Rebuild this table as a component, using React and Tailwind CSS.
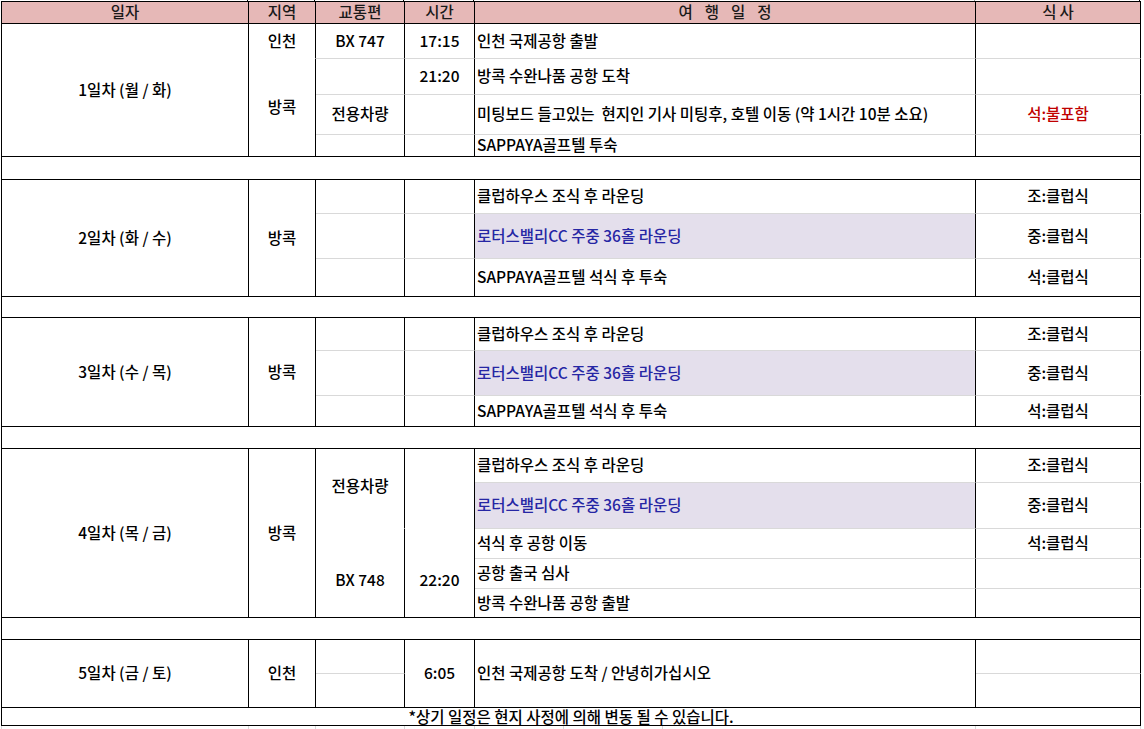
import React from "react";

const COLS = "grid grid-cols-[247px_67px_89px_70px_501px_165px]";

const SPAN = {
  1: "",
  2: "row-span-2",
  3: "row-span-3",
  4: "row-span-4",
  5: "row-span-5",
};
const BOT = {
  g: "border-b-[#d9d9d9]",
  k: "border-b-black",
  w: "border-b-white",
};

function C({ span = 1, b = "g", className = "items-center pb-[3px]", extra = "", children }) {
  return (
    <div
      className={`flex justify-center border-r border-b border-r-black ${BOT[b]} ${SPAN[span]} ${className} ${extra}`}
    >
      {children}
    </div>
  );
}

function E({ span = 1, b = "g", purple = false, children }) {
  return (
    <div
      className={`flex items-center justify-start pl-[2px] pb-[3px] whitespace-pre border-r border-b border-r-black ${BOT[b]} ${SPAN[span]} ${
        purple ? "bg-[#e4dfec] text-[#2626a4]" : ""
      }`}
    >
      {children}
    </div>
  );
}

function M({ b = "g", red = false, children }) {
  return (
    <div
      className={`flex items-center justify-center pb-[3px] border-r border-b border-r-black ${BOT[b]} ${
        red ? "text-[#c00000]" : ""
      }`}
    >
      {children}
    </div>
  );
}

function Spacer({ h }) {
  return <div className={`border-r border-b border-black ${h}`} />;
}

function GolfDay({ label, rows }) {
  return (
    <div className={`${COLS} ${rows}`}>
      <C span={3} b="k">{label}</C>
      <C span={3} b="k">방콕</C>
      <C />
      <C />
      <E>클럽하우스 조식 후 라운딩</E>
      <M>조:클럽식</M>
      <C />
      <C />
      <E purple>로터스밸리CC 주중 36홀 라운딩</E>
      <M>중:클럽식</M>
      <C b="k" />
      <C b="k" />
      <E b="k">SAPPAYA골프텔 석식 후 투숙</E>
      <M b="k">석:클럽식</M>
    </div>
  );
}

export default function App() {
  return (
    <div className="w-[1144px] h-[729px] overflow-hidden bg-white text-black text-[15.5px] leading-[20px] font-medium font-['Noto_Sans_CJK_KR',sans-serif]">
      {/* top sliver of the row above */}
      <div className={`${COLS} ml-[1px] h-[1px]`}>
        <div className="border-r border-black" />
        <div className="border-r border-black" />
        <div className="border-r border-black" />
        <div className="border-r border-black" />
        <div className="border-r border-[#9a9a9a]" />
        <div className="border-r border-black" />
      </div>

      <div className="ml-[1px] w-[1140px] border-l border-t border-black">
        {/* header */}
        <div className={`${COLS} grid-rows-[22px] bg-[#e6b8b7] text-[#1a1a1a]`}>
          <C b="k" className="items-center pb-[4px]">일자</C>
          <C b="k" className="items-center pb-[4px]">지역</C>
          <C b="k" className="items-center pb-[4px]">교통편</C>
          <C b="k" className="items-center pb-[4px]">시간</C>
          <C b="k" className="items-center pb-[4px] gap-[12px]">
            <span>여</span>
            <span>행</span>
            <span>일</span>
            <span>정</span>
          </C>
          <C b="k" className="items-center pb-[4px] gap-[3px]">
            <span>식</span>
            <span>사</span>
          </C>
        </div>

        {/* day 1 */}
        <div className={`${COLS} grid-rows-[35px_36px_40px_22px]`}>
          <C span={4} b="k">1일차 (월 / 화)</C>
          <C b="w">인천</C>
          <C>BX 747</C>
          <C>17:15</C>
          <E>인천 국제공항 출발</E>
          <M />
          <C span={3} b="k">방콕</C>
          <C />
          <C>21:20</C>
          <E>방콕 수완나품 공항 도착</E>
          <M />
          <C>전용차량</C>
          <C />
          <E>미팅보드 들고있는  현지인 기사 미팅후, 호텔 이동 (약 1시간 10분 소요)</E>
          <M red>석:불포함</M>
          <C b="k" />
          <C b="k" />
          <E b="k">SAPPAYA골프텔 투숙</E>
          <M b="k" />
        </div>

        <Spacer h="h-[23px]" />

        <GolfDay label="2일차 (화 / 수)" rows="grid-rows-[34px_45px_38px]" />

        <Spacer h="h-[21px]" />

        <GolfDay label="3일차 (수 / 목)" rows="grid-rows-[33px_45px_31px]" />

        <Spacer h="h-[22px]" />

        {/* day 4 */}
        <div className={`${COLS} grid-rows-[34px_46px_30px_30px_29px]`}>
          <C span={5} b="k">4일차 (목 / 금)</C>
          <C span={5} b="k">방콕</C>
          <C span={2} b="w" className="items-center pb-[8px]">전용차량</C>
          <C span={5} b="k" className="items-start pt-[120px]">22:20</C>
          <E>클럽하우스 조식 후 라운딩</E>
          <M>조:클럽식</M>
          <E purple>로터스밸리CC 주중 36홀 라운딩</E>
          <M>중:클럽식</M>
          <C span={3} b="k" className="items-start pt-[40px]">BX 748</C>
          <E>석식 후 공항 이동</E>
          <M>석:클럽식</M>
          <E>공항 출국 심사</E>
          <M />
          <E b="k">방콕 수완나품 공항 출발</E>
          <M b="k" />
        </div>

        <Spacer h="h-[22px]" />

        {/* day 5 */}
        <div className={`${COLS} grid-rows-[34px_34px]`}>
          <C span={2} b="k">5일차 (금 / 토)</C>
          <C span={2} b="k">인천</C>
          <C />
          <C span={2} b="k">6:05</C>
          <E span={2} b="k">인천 국제공항 도착 / 안녕히가십시오</E>
          <M />
          <C b="k" />
          <M b="k" />
        </div>

        {/* footer note */}
        <div className="h-[18px] flex items-center justify-center pb-[1px] leading-[18px] border-r border-b border-black">
          *상기 일정은 현지 사정에 의해 변동 될 수 있습니다.
        </div>
      </div>

      {/* bottom sliver of the next rows */}
      <div className="ml-[1px] w-[1140px] h-[4px] flex border-l border-[#d9d9d9]">
        <div className="w-[247px] border-r border-[#d9d9d9]" />
        <div className="w-[67px] border-r border-[#d9d9d9]" />
        <div className="w-[89px] border-r border-[#d9d9d9]" />
        <div className="w-[70px] border-r border-[#d9d9d9]" />
        <div className="w-[89px] border-r border-[#d9d9d9]" />
        <div className="w-[99px] border-r border-[#d9d9d9]" />
        <div className="w-[313px] border-r border-[#d9d9d9]" />
        <div className="w-[165px] border-r border-[#d9d9d9]" />
      </div>
    </div>
  );
}
